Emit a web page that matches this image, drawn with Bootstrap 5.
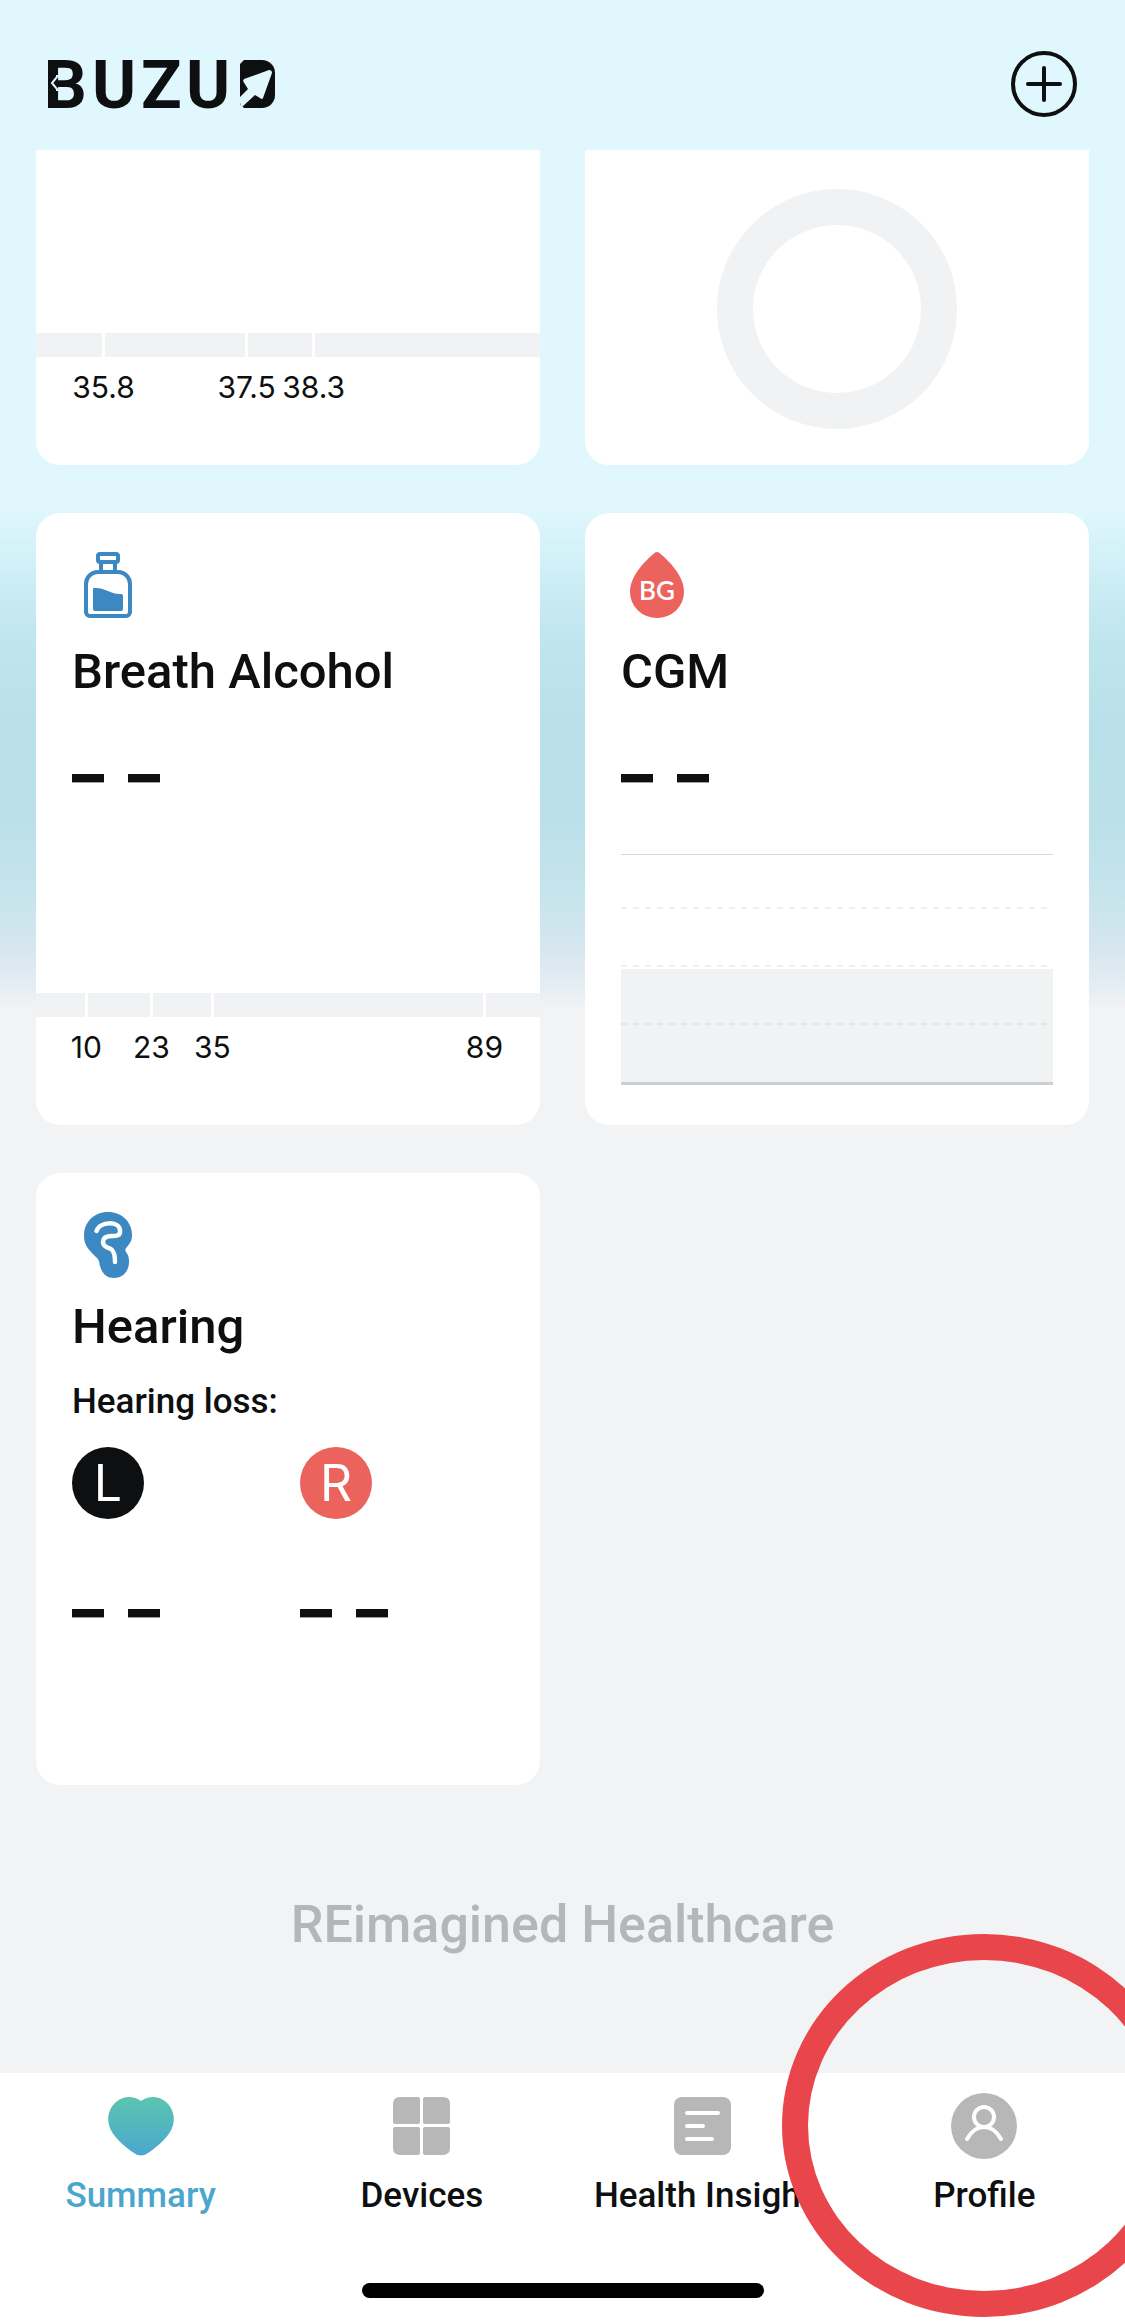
<!DOCTYPE html>
<html lang="en">
<head>
<meta charset="utf-8">
<meta name="viewport" content="width=device-width, initial-scale=1">
<title>BUZUD Summary</title>
<link href="https://cdn.jsdelivr.net/npm/bootstrap@5.3.0/dist/css/bootstrap.min.css" rel="stylesheet">
<style>
  :root { --ink: #0d0f10; --soft: #f1f2f4; --coral: #ec625c; --blue: #3c88c3; }
  body { font-family: Roboto, "Liberation Sans", sans-serif; color: var(--ink); background: #f2f3f5; }
  .app-shell {
    overflow: hidden;
    background: linear-gradient(#e1f7fe 0, #e1f7fe 505px, #d3f1f8 555px, #bfe5ee 640px, #b9e0ea 730px, #bbe0e9 820px, #c5e4ec 890px, #d5e6ef 945px, #e2ecf2 980px, #f2f3f5 1010px);
  }
  .app-header { height: 150px; padding: 0 48px; }
  .app-header .round-btn { line-height: 0; margin-top: 18px; }
  .app-header .brand { margin-top: 18px; line-height: 0; }
  .brand text { font: 700 67px Roboto, sans-serif; }
  .tiles { display: grid; grid-template-columns: 1fr 1fr; gap: 48px 45px; padding: 0 36px; }
  .tile { --bs-card-border-radius: 24px; --bs-card-border-width: 0; --bs-card-color: var(--ink); min-height: 612px; }
  .tile-cut { min-height: 315px; border-top-left-radius: 0; border-top-right-radius: 0; }
  .tile-top { padding: 36px 36px 0; }
  .tile-icon { width: 72px; height: 72px; display: block; }
  .tile-title { font-size: 49px; line-height: 60px; font-weight: 500; margin: 21px 0 0; }
  .tile-title-tight { margin-top: 16px; }
  .reading { font: 800 64px/96px Inter, sans-serif; margin: 24px 0 0; }
  .reading-ear { margin-top: 42px; }
  .scale { height: 132px; }
  .scale .seg { height: 24px; background: var(--soft); }
  .scale .tick { width: 3px; flex: none; padding-top: 36px; white-space: nowrap; font: 400 30px/36px Inter, sans-serif; }
  .ring-box { padding-bottom: 36px; }
  .cgm-chart { padding: 0 36px 40px; }
  .sub-label { font-size: 35px; line-height: 48px; font-weight: 500; margin: 21px 0; }
  .ears { display: grid; grid-template-columns: 1fr 1fr; gap: 24px; }
  .ear { width: 72px; height: 72px; font: 400 50px/72px Inter, sans-serif; color: #fff; }
  .ear-l { background: var(--ink); }
  .ear-r { background: var(--coral); }
  .tagline { font-size: 52px; line-height: 60px; font-weight: 500; color: #b4b6b8; margin: 0; padding: 110px 0 118px; }
  .tabbar { height: 249px; background: #fff; }
  .tabbar .tab { padding-top: 18px; color: var(--ink); font-size: 35px; line-height: 48px; font-weight: 500; white-space: nowrap; }
  .tabbar .tab svg { margin-bottom: 9px; }
  .tabbar .tab.active { color: #4aa6cc; }
  .marker { position: absolute; left: 50%; top: -139px; width: 404px; height: 383px; transform: translateX(-50%); border: 26px solid #e9464b; border-radius: 50%; pointer-events: none; }
  .home-bar { width: 402px; height: 15px; background: #000; border-radius: 8px; margin-bottom: 24px; }
</style>
</head>
<body>
<div class="app-shell d-flex flex-column min-vh-100">
  <header class="app-header d-flex justify-content-between align-items-center">
    <a class="brand" href="#" aria-label="BUZUD">
      <svg width="230" height="48" viewBox="0 0 230 48" fill="#0d0f10" overflow="visible">
        <text x="-4 44 93 138" y="48">BUZU</text>
        <path d="M0 0h8v48H0z"/>
        <path d="M9 15v2l-5 6 5 6v2" fill="none" stroke="#e1f7fe" stroke-width="2"/>
        <path d="M196 0h18a13 13 0 0 1 13 13v22a13 13 0 0 1-13 13h-18l-4-4v-40z"/>
        <path d="M190 39l10-10-5-8 1-2 25-9q3 0 3 3l-9 25q-1 2-3 0l-5-3-13 12z" fill="#e1f7fe"/>
      </svg>
    </a>
    <button class="round-btn btn p-0 border-0" type="button" aria-label="Add">
      <svg width="66" height="66" viewBox="0 0 66 66" fill="none" stroke="#0d0f10" stroke-linecap="round">
        <circle cx="33" cy="33" r="31" stroke-width="4"/><path d="M33 17v32M17 33h32" stroke-width="4"/>
      </svg>
    </button>
  </header>

  <main class="flex-grow-1">
    <div class="tiles">
      <section class="card tile tile-cut" aria-label="Temperature">
        <div class="scale d-flex mt-auto">
          <div class="seg" style="width:13.1%"></div><div class="tick d-flex flex-column align-items-center">35.8</div>
          <div class="seg" style="width:27.8%"></div><div class="tick d-flex flex-column align-items-center">37.5</div>
          <div class="seg" style="width:12.7%"></div><div class="tick d-flex flex-column align-items-center">38.3</div>
          <div class="seg flex-grow-1"></div>
        </div>
      </section>
      <section class="card tile tile-cut" aria-label="Activity ring">
        <div class="ring-box mt-auto text-center lh-1">
          <svg class="d-block mx-auto" width="240" height="240" viewBox="0 0 240 240"><circle cx="120" cy="120" r="102" fill="none" stroke="#f1f2f4" stroke-width="36"/></svg>
        </div>
      </section>

      <section class="card tile">
        <div class="tile-top">
          <svg class="tile-icon" viewBox="0 0 72 72" fill="none" stroke="#3c88c3" stroke-width="4">
            <rect x="26" y="5" width="20" height="8" rx="2"/>
            <path d="M29 13v10M43 13v10"/>
            <path d="M26 23h20a12 12 0 0 1 12 12v28a4 4 0 0 1-4 4H18a4 4 0 0 1-4-4V35a12 12 0 0 1 12-12z"/>
            <path d="M21 40q0-1 1-1c14 0 14 6 27 6q2 0 2 2v13q0 2-2 2H23q-2 0-2-2z" fill="#3c88c3" stroke="none"/>
          </svg>
          <h2 class="tile-title">Breath Alcohol</h2>
          <p class="reading d-flex gap-4"><span>–</span><span>–</span></p>
        </div>
        <div class="scale d-flex mt-auto">
          <div class="seg" style="width:9.7%"></div><div class="tick d-flex flex-column align-items-center">10</div>
          <div class="seg" style="width:12.3%"></div><div class="tick d-flex flex-column align-items-center">23</div>
          <div class="seg" style="width:11.5%"></div><div class="tick d-flex flex-column align-items-center">35</div>
          <div class="seg" style="width:53.4%"></div><div class="tick d-flex flex-column align-items-center">89</div>
          <div class="seg flex-grow-1"></div>
        </div>
      </section>

      <section class="card tile">
        <div class="tile-top">
          <svg class="tile-icon" viewBox="0 0 72 72">
            <path d="M33.500 4q2.500-2 5 0C49 13 63 27 63 43a27 26 0 0 1-54 0C9 27 23 13 33.500 4z" fill="#ec625c"/>
            <text x="36" y="51" text-anchor="middle" fill="#fff" style="font:600 26px Lato,sans-serif">BG</text>
          </svg>
          <h2 class="tile-title">CGM</h2>
          <p class="reading d-flex gap-4"><span>–</span><span>–</span></p>
        </div>
        <div class="cgm-chart mt-auto">
          <svg class="d-block w-100" height="231" viewBox="0 0 432 231" preserveAspectRatio="none" shape-rendering="crispEdges">
            <rect width="432" height="1" fill="#d8d9da"/>
            <rect y="115" width="432" height="113" fill="#f1f2f4"/>
            <path d="M0 54h432M0 112h432" stroke="#efefef" stroke-width="2" stroke-dasharray="6"/>
            <path d="M0 170h432" stroke="#e4e5e7" stroke-width="2" stroke-dasharray="6"/>
            <rect y="228" width="432" height="3" fill="#cdced1"/>
          </svg>
        </div>
      </section>

      <section class="card tile">
        <div class="tile-top">
          <svg class="tile-icon" viewBox="0 0 72 72">
            <path d="M36 3C50 3 60 13 60 26c0 6-2 8-5 12-2 2-2 3-1 5 3 4 3 7 3 10 0 9-6 16-15 16-8 0-12-5-14-12-1-5-1-6-3-8C18 42 12 37 12 27 12 13 22 3 36 3z" fill="#3c88c3"/>
            <path d="M24.500 22C28 12 47 12 48 21c1 6-4 6-8 6-6 0-9 2-9 6 0 5 5 6 8 7 3 2 4 5 4 13" fill="none" stroke="#fff" stroke-width="4.500" stroke-linecap="round"/>
          </svg>
          <h2 class="tile-title tile-title-tight">Hearing</h2>
          <p class="sub-label">Hearing loss:</p>
          <div class="ears">
            <div><div class="ear ear-l rounded-circle text-center">L</div><p class="reading reading-ear d-flex gap-4"><span>–</span><span>–</span></p></div>
            <div><div class="ear ear-r rounded-circle text-center">R</div><p class="reading reading-ear d-flex gap-4"><span>–</span><span>–</span></p></div>
          </div>
        </div>
      </section>
    </div>
    <p class="tagline text-center">REimagined Healthcare</p>
  </main>

  <nav class="tabbar d-flex flex-column justify-content-between align-items-center" aria-label="Main">
    <div class="row g-0 w-100">
      <a class="tab active col-3 d-flex flex-column align-items-center text-decoration-none" href="#" aria-current="page">
        <svg width="68" height="72" viewBox="0 0 68 72"><defs><linearGradient id="heart" x2="0" y2="1"><stop stop-color="#5bc5b0"/><stop offset="1" stop-color="#4ba6cf"/></linearGradient></defs>
          <path d="M34 10C42 4 52 5 59 11c9 8 10 20 4 30-5 8-13 15-22 21q-7 5-14 0C18 56 10 49 5 41-1 31 0 19 9 11 16 5 26 4 34 10z" fill="url(#heart)"/></svg>
        Summary</a>
      <a class="tab col-3 d-flex flex-column align-items-center text-decoration-none" href="#">
        <svg width="58" height="72" viewBox="0 0 58 72" fill="#b7b7b7">
          <path d="M7 6h18q2 0 2 2v23q0 2-2 2H2q-2 0-2-2V13q0-7 7-7zM32 6h18q7 0 7 7v18q0 2-2 2H32q-2 0-2-2V8q0-2 2-2zM2 36h23q2 0 2 2v24q0 2-2 2H7q-7 0-7-7V38q0-2 2-2zM32 36h23q2 0 2 2v19q0 7-7 7H32q-2 0-2-2V38q0-2 2-2z"/></svg>
        Devices</a>
      <a class="tab col-3 d-flex flex-column align-items-center text-decoration-none" href="#">
        <svg width="58" height="72" viewBox="0 0 58 72"><rect y="6" width="57" height="58" rx="8" fill="#b7b7b7"/><path d="M13 22h31M13 35h16M13 48h25" stroke="#fff" stroke-width="4" stroke-linecap="round"/></svg>
        Health Insight</a>
      <a class="tab col-3 d-flex flex-column align-items-center text-decoration-none position-relative" href="#">
        <svg width="66" height="72" viewBox="0 0 66 72"><circle cx="33" cy="35" r="33" fill="#b7b7b7"/><g fill="none" stroke="#fff" stroke-width="4" stroke-linecap="round"><circle cx="33" cy="26" r="10"/><path d="M16 48C25 32 41 32 50 48"/></g></svg>
        Profile
        <span class="marker"></span></a>
    </div>
    <div class="home-bar"></div>
  </nav>
</div>
<script src="https://cdn.jsdelivr.net/npm/bootstrap@5.3.0/dist/js/bootstrap.bundle.min.js"></script>
</body>
</html>
